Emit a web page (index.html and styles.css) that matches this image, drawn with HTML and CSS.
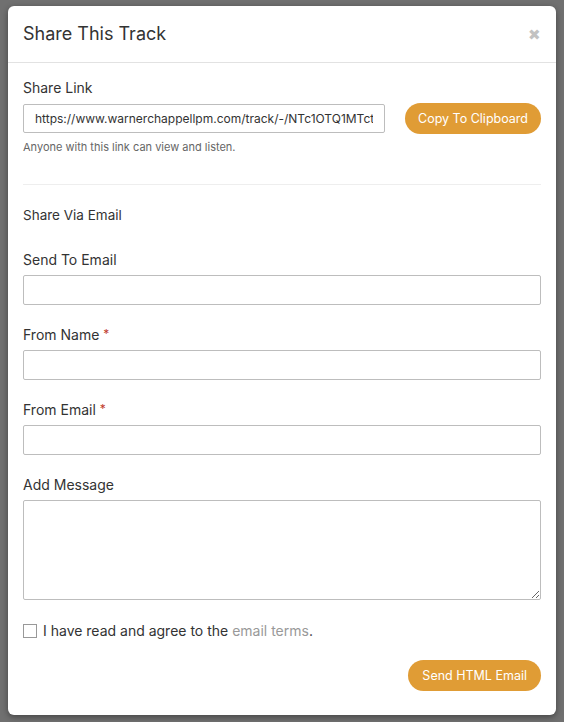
FILE: index.html
```html
<html>
  <head>
    <meta charset="utf-8">
    <title>Share This Track</title>
    <link rel="stylesheet" href="styles.css">
  </head>
  <body>
    <div class="overlay">
      <div class="modal">
        <div class="modal-header">
          <h2 class="modal-title">Share This Track</h2>
          <span class="close">&#x2716;</span>
        </div>
        <div class="modal-body">
          <div class="share-link">
            <label class="label">Share Link</label>
            <div class="link-row">
              <input class="field link-field" type="text" value="https://www.warnerchappellpm.com/track/-/NTc1OTQ1MTct">
              <button class="btn">Copy To Clipboard</button>
            </div>
            <p class="help">Anyone with this link can view and listen.</p>
          </div>

          <h3 class="section-title">Share Via Email</h3>

          <div class="group first">
            <label class="label">Send To Email</label>
            <input class="field" type="text">
          </div>
          <div class="group">
            <label class="label">From Name <span class="req">*</span></label>
            <input class="field" type="text">
          </div>
          <div class="group">
            <label class="label">From Email <span class="req">*</span></label>
            <input class="field" type="text">
          </div>
          <div class="group">
            <label class="label">Add Message</label>
            <textarea class="field message"></textarea>
          </div>

          <div class="terms">
            <span class="box"></span>
            <span>I have read and agree to the <a class="terms-link">email terms</a>.</span>
          </div>

          <div class="actions">
            <button class="btn">Send HTML Email</button>
          </div>
        </div>
      </div>
    </div>
  </body>
</html>
```
FILE: styles.css
```css
* {
  box-sizing: border-box;
  font-family: Inter, "Noto Sans", Arial, sans-serif;
}

body {
  margin: 0;
  background-color: #707070;
}

.overlay {
  padding: 6px 8px 7px 8px;
  height: 722px;
}

.modal {
  background-color: #fff;
  border-radius: 6px;
  height: 709px;
  box-shadow: 0 2px 6px rgba(0, 0, 0, .4);
}

.modal-header {
  display: flex;
  justify-content: space-between;
  align-items: flex-start;
  padding: 17px 15px 0 15px;
  height: 57px;
  border-bottom: 1px solid #e2e2e2;
}

.modal-title {
  margin: 0;
  font-size: 18px;
  font-weight: 400;
  color: #333;
}

.close {
  color: #c2c2c2;
  font-size: 15px;
  line-height: 15px;
  padding-top: 4px;
}

.modal-body {
  padding: 16px 15px 0 15px;
}

.share-link {
  padding-bottom: 30px;
  border-bottom: 1px solid #eee;
}

.label {
  display: block;
  font-size: 14px;
  color: #333;
  margin-bottom: 7px;
}

.req {
  color: #c0392b;
  font-size: 12px;
  vertical-align: top;
}

.link-row {
  display: flex;
  align-items: center;
  justify-content: space-between;
}

.field {
  display: block;
  width: 100%;
  height: 30px;
  border: 1px solid #bdbdbd;
  border-radius: 2px;
  padding: 0 11px;
  font-size: 13px;
  color: #333;
  background: #fff;
}

.link-field {
  width: 362px;
  height: 29px;
  font-size: 12px;
}

.btn {
  background-color: #e09c35;
  color: #fff;
  border: 0;
  border-radius: 16px;
  height: 31px;
  padding: 0 14px;
  font-size: 12.5px;
  font-weight: 400;
}

.link-row .btn {
  padding: 0 13px;
}

.help {
  margin: 6px 0 0;
  font-size: 11px;
  color: #666;
}

.section-title {
  margin: 22px 0 0;
  font-size: 13.5px;
  font-weight: 400;
  color: #333;
}

.group {
  margin-top: 21px;
}

.group.first {
  margin-top: 28px;
}

.message {
  height: 100px;
  resize: vertical;
}

.terms {
  display: flex;
  align-items: center;
  gap: 6px;
  margin-top: 22px;
  font-size: 14px;
  color: #333;
}

.box {
  width: 14px;
  height: 14px;
  border: 1px solid #999;
  background: #fff;
}

.terms-link {
  color: #999;
}

.actions {
  display: flex;
  justify-content: flex-end;
  margin-top: 21px;
}
```
